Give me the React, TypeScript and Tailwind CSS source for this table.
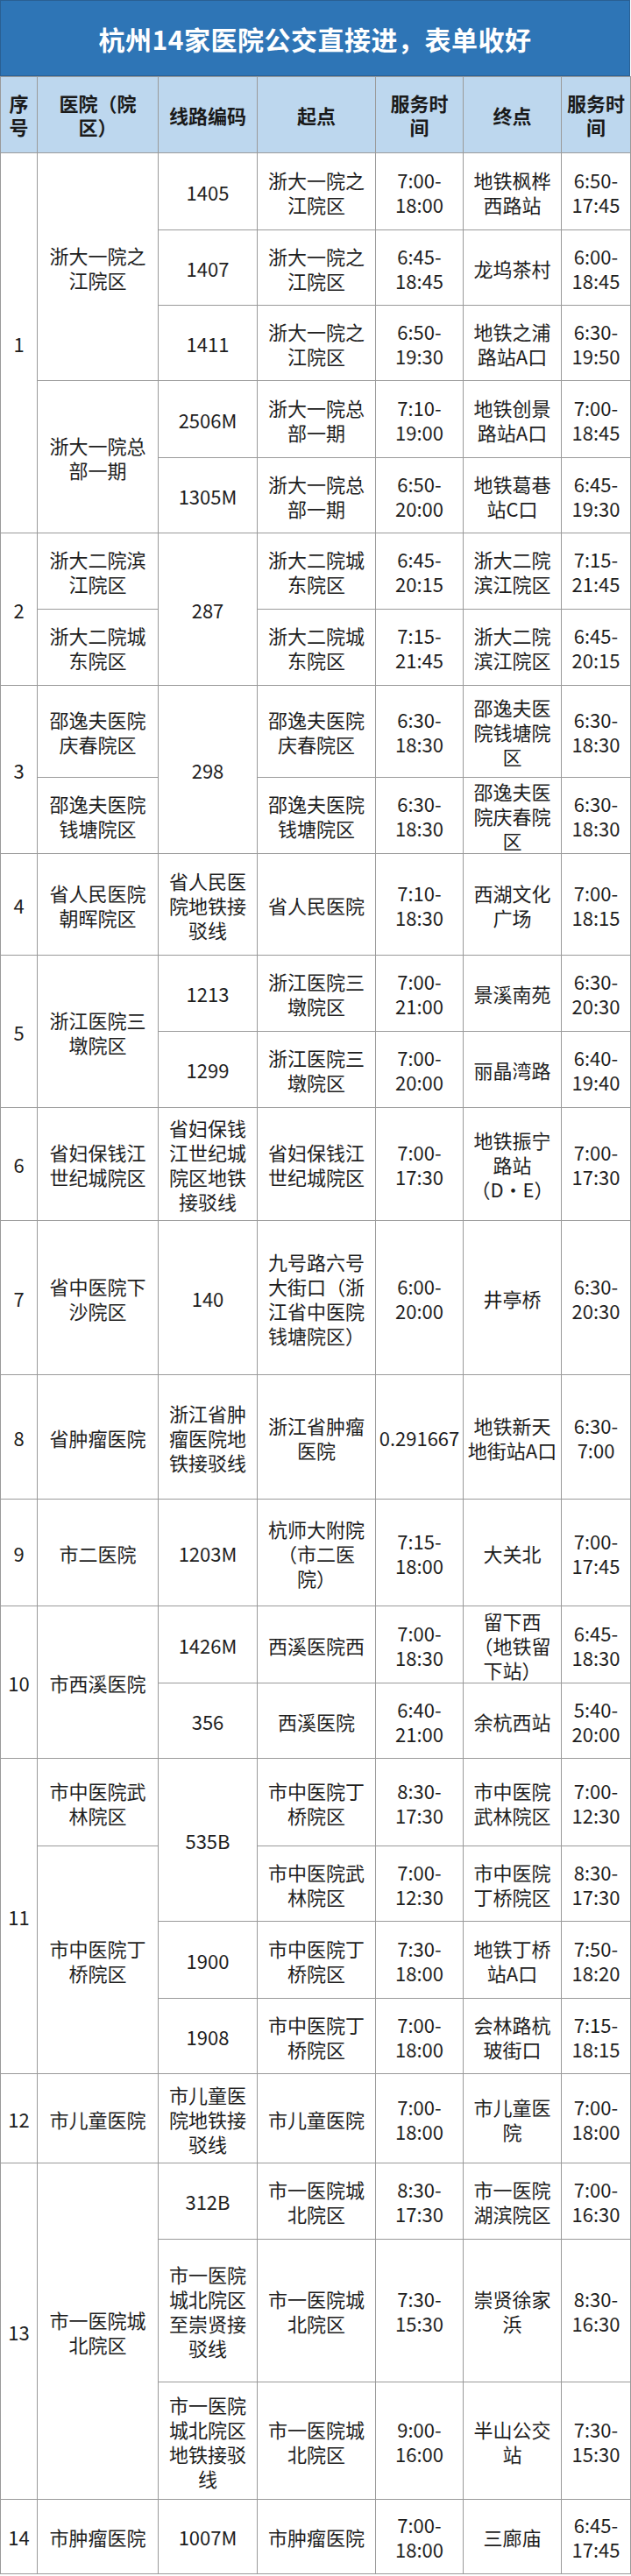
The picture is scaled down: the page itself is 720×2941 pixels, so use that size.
import React from 'react';

interface Cell {
  t: string;
  rs?: number;
}

interface Row {
  h: string;
  cells: Cell[];
}

const headers = ['序\n号', '医院（院\n区）', '线路编码', '起点', '服务时\n间', '终点', '服务时\n间'];

const rows: Row[] = [
  {
    h: 'h-[88px]',
    cells: [
      { t: '1', rs: 5 },
      { t: '浙大一院之\n江院区', rs: 3 },
      { t: '1405' },
      { t: '浙大一院之\n江院区' },
      { t: '7:00-\n18:00' },
      { t: '地铁枫桦\n西路站' },
      { t: '6:50-\n17:45' },
    ],
  },
  {
    h: 'h-[86px]',
    cells: [
      { t: '1407' },
      { t: '浙大一院之\n江院区' },
      { t: '6:45-\n18:45' },
      { t: '龙坞茶村' },
      { t: '6:00-\n18:45' },
    ],
  },
  {
    h: 'h-[86px]',
    cells: [
      { t: '1411' },
      { t: '浙大一院之\n江院区' },
      { t: '6:50-\n19:30' },
      { t: '地铁之浦\n路站A口' },
      { t: '6:30-\n19:50' },
    ],
  },
  {
    h: 'h-[88px]',
    cells: [
      { t: '浙大一院总\n部一期', rs: 2 },
      { t: '2506M' },
      { t: '浙大一院总\n部一期' },
      { t: '7:10-\n19:00' },
      { t: '地铁创景\n路站A口' },
      { t: '7:00-\n18:45' },
    ],
  },
  {
    h: 'h-[86px]',
    cells: [
      { t: '1305M' },
      { t: '浙大一院总\n部一期' },
      { t: '6:50-\n20:00' },
      { t: '地铁葛巷\n站C口' },
      { t: '6:45-\n19:30' },
    ],
  },
  {
    h: 'h-[87px]',
    cells: [
      { t: '2', rs: 2 },
      { t: '浙大二院滨\n江院区' },
      { t: '287', rs: 2 },
      { t: '浙大二院城\n东院区' },
      { t: '6:45-\n20:15' },
      { t: '浙大二院\n滨江院区' },
      { t: '7:15-\n21:45' },
    ],
  },
  {
    h: 'h-[87px]',
    cells: [
      { t: '浙大二院城\n东院区' },
      { t: '浙大二院城\n东院区' },
      { t: '7:15-\n21:45' },
      { t: '浙大二院\n滨江院区' },
      { t: '6:45-\n20:15' },
    ],
  },
  {
    h: 'h-[105px]',
    cells: [
      { t: '3', rs: 2 },
      { t: '邵逸夫医院\n庆春院区' },
      { t: '298', rs: 2 },
      { t: '邵逸夫医院\n庆春院区' },
      { t: '6:30-\n18:30' },
      { t: '邵逸夫医\n院钱塘院\n区' },
      { t: '6:30-\n18:30' },
    ],
  },
  {
    h: 'h-[87px]',
    cells: [
      { t: '邵逸夫医院\n钱塘院区' },
      { t: '邵逸夫医院\n钱塘院区' },
      { t: '6:30-\n18:30' },
      { t: '邵逸夫医\n院庆春院\n区' },
      { t: '6:30-\n18:30' },
    ],
  },
  {
    h: 'h-[116px]',
    cells: [
      { t: '4' },
      { t: '省人民医院\n朝晖院区' },
      { t: '省人民医\n院地铁接\n驳线' },
      { t: '省人民医院' },
      { t: '7:10-\n18:30' },
      { t: '西湖文化\n广场' },
      { t: '7:00-\n18:15' },
    ],
  },
  {
    h: 'h-[87px]',
    cells: [
      { t: '5', rs: 2 },
      { t: '浙江医院三\n墩院区', rs: 2 },
      { t: '1213' },
      { t: '浙江医院三\n墩院区' },
      { t: '7:00-\n21:00' },
      { t: '景溪南苑' },
      { t: '6:30-\n20:30' },
    ],
  },
  {
    h: 'h-[87px]',
    cells: [
      { t: '1299' },
      { t: '浙江医院三\n墩院区' },
      { t: '7:00-\n20:00' },
      { t: '丽晶湾路' },
      { t: '6:40-\n19:40' },
    ],
  },
  {
    h: 'h-[129px]',
    cells: [
      { t: '6' },
      { t: '省妇保钱江\n世纪城院区' },
      { t: '省妇保钱\n江世纪城\n院区地铁\n接驳线' },
      { t: '省妇保钱江\n世纪城院区' },
      { t: '7:00-\n17:30' },
      { t: '地铁振宁\n路站\n（D·E）' },
      { t: '7:00-\n17:30' },
    ],
  },
  {
    h: 'h-[176px]',
    cells: [
      { t: '7' },
      { t: '省中医院下\n沙院区' },
      { t: '140' },
      { t: '九号路六号\n大街口（浙\n江省中医院\n钱塘院区）' },
      { t: '6:00-\n20:00' },
      { t: '井亭桥' },
      { t: '6:30-\n20:30' },
    ],
  },
  {
    h: 'h-[142px]',
    cells: [
      { t: '8' },
      { t: '省肿瘤医院' },
      { t: '浙江省肿\n瘤医院地\n铁接驳线' },
      { t: '浙江省肿瘤\n医院' },
      { t: '0.291667' },
      { t: '地铁新天\n地街站A口' },
      { t: '6:30-\n7:00' },
    ],
  },
  {
    h: 'h-[122px]',
    cells: [
      { t: '9' },
      { t: '市二医院' },
      { t: '1203M' },
      { t: '杭师大附院\n（市二医\n院）' },
      { t: '7:15-\n18:00' },
      { t: '大关北' },
      { t: '7:00-\n17:45' },
    ],
  },
  {
    h: 'h-[88px]',
    cells: [
      { t: '10', rs: 2 },
      { t: '市西溪医院', rs: 2 },
      { t: '1426M' },
      { t: '西溪医院西' },
      { t: '7:00-\n18:30' },
      { t: '留下西\n（地铁留\n下站）' },
      { t: '6:45-\n18:30' },
    ],
  },
  {
    h: 'h-[86px]',
    cells: [
      { t: '356' },
      { t: '西溪医院' },
      { t: '6:40-\n21:00' },
      { t: '余杭西站' },
      { t: '5:40-\n20:00' },
    ],
  },
  {
    h: 'h-[100px]',
    cells: [
      { t: '11', rs: 4 },
      { t: '市中医院武\n林院区' },
      { t: '535B', rs: 2 },
      { t: '市中医院丁\n桥院区' },
      { t: '8:30-\n17:30' },
      { t: '市中医院\n武林院区' },
      { t: '7:00-\n12:30' },
    ],
  },
  {
    h: 'h-[86px]',
    cells: [
      { t: '市中医院丁\n桥院区', rs: 3 },
      { t: '市中医院武\n林院区' },
      { t: '7:00-\n12:30' },
      { t: '市中医院\n丁桥院区' },
      { t: '8:30-\n17:30' },
    ],
  },
  {
    h: 'h-[88px]',
    cells: [
      { t: '1900' },
      { t: '市中医院丁\n桥院区' },
      { t: '7:30-\n18:00' },
      { t: '地铁丁桥\n站A口' },
      { t: '7:50-\n18:20' },
    ],
  },
  {
    h: 'h-[86px]',
    cells: [
      { t: '1908' },
      { t: '市中医院丁\n桥院区' },
      { t: '7:00-\n18:00' },
      { t: '会林路杭\n玻街口' },
      { t: '7:15-\n18:15' },
    ],
  },
  {
    h: 'h-[102px]',
    cells: [
      { t: '12' },
      { t: '市儿童医院' },
      { t: '市儿童医\n院地铁接\n驳线' },
      { t: '市儿童医院' },
      { t: '7:00-\n18:00' },
      { t: '市儿童医\n院' },
      { t: '7:00-\n18:00' },
    ],
  },
  {
    h: 'h-[87px]',
    cells: [
      { t: '13', rs: 3 },
      { t: '市一医院城\n北院区', rs: 3 },
      { t: '312B' },
      { t: '市一医院城\n北院区' },
      { t: '8:30-\n17:30' },
      { t: '市一医院\n湖滨院区' },
      { t: '7:00-\n16:30' },
    ],
  },
  {
    h: 'h-[163px]',
    cells: [
      { t: '市一医院\n城北院区\n至崇贤接\n驳线' },
      { t: '市一医院城\n北院区' },
      { t: '7:30-\n15:30' },
      { t: '崇贤徐家\n浜' },
      { t: '8:30-\n16:30' },
    ],
  },
  {
    h: 'h-[134px]',
    cells: [
      { t: '市一医院\n城北院区\n地铁接驳\n线' },
      { t: '市一医院城\n北院区' },
      { t: '9:00-\n16:00' },
      { t: '半山公交\n站' },
      { t: '7:30-\n15:30' },
    ],
  },
  {
    h: 'h-[85px]',
    cells: [
      { t: '14' },
      { t: '市肿瘤医院' },
      { t: '1007M' },
      { t: '市肿瘤医院' },
      { t: '7:00-\n18:00' },
      { t: '三廊庙' },
      { t: '6:45-\n17:45' },
    ],
  },
];

export default function App() {
  return (
    <div className="w-[720px] bg-white font-['Noto_Sans_CJK_SC','Noto_Sans',sans-serif]">
      {/* Title bar */}
      <div className="flex h-[87px] w-[719px] items-center justify-center border border-[#2a5f93] bg-[#2e75b6]">
        <h1 className="text-[30px] font-bold leading-none tracking-[0.5px] text-white">
          杭州14家医院公交直接进，表单收好
        </h1>
      </div>

      <table className="w-[719px] table-fixed border-collapse text-[22px] leading-[28px] text-[#1e1e1e]">
        <colgroup>
          <col className="w-[42px]" />
          <col className="w-[138px]" />
          <col className="w-[113px]" />
          <col className="w-[135px]" />
          <col className="w-[100px]" />
          <col className="w-[112px]" />
          <col className="w-[79px]" />
        </colgroup>
        <thead>
          <tr className="h-[87px] bg-[#bdd7ee]">
            {headers.map((h, i) => (
              <th
                key={i}
                className="border border-[#9a9a9a] p-0 text-center align-middle font-bold leading-[27px] whitespace-pre-line text-[#1a1a1a]"
              >
                {h}
              </th>
            ))}
          </tr>
        </thead>
        <tbody>
          {rows.map((row, ri) => (
            <tr key={ri} className={row.h}>
              {row.cells.map((c, ci) => (
                <td
                  key={ci}
                  rowSpan={c.rs}
                  className="border border-[#9a9a9a] p-0 text-center align-middle whitespace-pre-line"
                >
                  {c.t}
                </td>
              ))}
            </tr>
          ))}
        </tbody>
      </table>
    </div>
  );
}
